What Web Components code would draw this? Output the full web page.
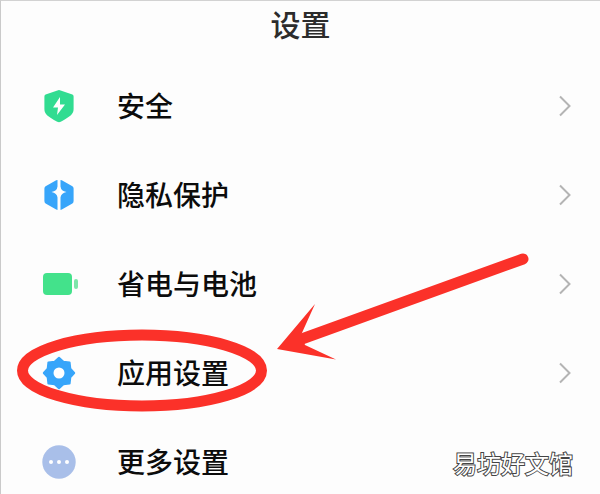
<!DOCTYPE html>
<html lang="zh-CN">
<head>
<meta charset="utf-8">
<meta name="viewport" content="width=device-width, initial-scale=1">
<title>设置</title>
<style>
  body {
    margin: 0;
    background: #fdfdfd;
    color: #0c0c0c;
    font-family: "Noto Sans CJK SC", sans-serif;
  }
</style>
</head>
<body>
<settings-page heading="设置">
  <settings-row icon="shield" arrow>安全</settings-row>
  <settings-row icon="privacy" arrow>隐私保护</settings-row>
  <settings-row icon="battery" arrow>省电与电池</settings-row>
  <settings-row icon="gear" arrow>应用设置</settings-row>
  <settings-row icon="more">更多设置</settings-row>
  <pointer-marks slot="overlay"></pointer-marks>
  <water-mark slot="overlay">易坊好文馆</water-mark>
</settings-page>

<script>
class SettingsElement extends HTMLElement {
  get html() {
    return `<slot></slot>`;
  }

  get css() {
    return ``;
  }

  constructor() {
    super();
    this.root = this.attachShadow({ mode: 'open' });
  }

  connectedCallback() {
    this.root.innerHTML = `<style>${this.css}</style>` + this.html;
  }

  /** SettingsRow is registered as settings-row, and so on. */
  static defineElement() {
    const elementName = this.name.replace(
      /([a-z0-9])([A-Z])/g, '$1-$2').toLowerCase();

    if (!customElements.get(elementName)) {
      customElements.define(elementName, this);
    }
  }
}

class SettingsPage extends SettingsElement {
  get html() {
    return `
      <header><h1>${this.getAttribute('heading')}</h1></header>
      <main><slot></slot></main>
      <slot name="overlay"></slot>`;
  }

  get css() {
    return `
      :host {
        display: block;
        position: relative;
        box-sizing: border-box;
        height: 100vh;
        overflow: hidden;
        border-top: 1px solid #d2d2d2;
        border-left: 1px solid #cacaca;
      }
      h1 {
        margin: 0;
        color: #2c2c2c;
        font-size: 30px;
        font-weight: 500;
        line-height: 44px;
        text-align: center;
      }
      header { padding-bottom: 16px; }
      main { display: grid; grid-auto-rows: 89px; }
    `;
  }
}

class SettingsRow extends SettingsElement {
  get html() {
    const arrow = this.hasAttribute('arrow') ? `
      <svg class="arrow" viewBox="0 0 12 22" aria-hidden="true">
        <path d="M1 1.5 10.5 11 1 20.5" fill="none" stroke="#b4b4b4" stroke-width="2"/>
      </svg>` : '';

    return `
      <a href="#${this.getAttribute('icon')}">
        <row-icon name="${this.getAttribute('icon')}"></row-icon>
        <span><slot></slot></span>
        ${arrow}
      </a>`;
  }

  get css() {
    return `
      :host { display: block; }
      a {
        display: flex;
        align-items: center;
        height: 100%;
        padding: 0 29px 0 40px;
        box-sizing: border-box;
        color: inherit;
        text-decoration: none;
      }
      span {
        flex: 1;
        padding: 0 0 2px 40px;
        font-size: 28px;
        font-weight: 500;
        line-height: 40px;
      }
      .arrow { width: 12px; height: 22px; }
    `;
  }
}

class RowIcon extends SettingsElement {
  static get SHAPES() {
    return {
      shield: `
        <path fill="#31dc91" d="M16.4 2.4q1.6-.7 3.2 0L31.4 6.500Q32.600 7 32.600 8.500V21c0 5.500-3.600 7.500-12.800 12.700q-1.800.9-3.600 0C7 28.500 3.400 26.500 3.400 21V8.500Q3.400 7 4.600 6.500Z"/>
        <path fill="#fff" d="M19 9 12 19.500h5L16 27 24 16.500h-5Z"/>`,
      privacy: `
        <path fill="#37a5fa" d="M16.500 3v6.500q-.5 4.500-6 5.500 5.500 1 6 5.500V33q-.6 0-1.300-.4L4.600 26.500Q3.400 25.700 3.400 24V11.500Q3.400 10 4.600 9.300L15.200 3.300Q16 3 16.500 3ZM19.500 3v6.500q.5 4.500 6 5.500-5.500 1-6 5.500V33q.6 0 1.300-.4L31.400 26.500Q32.600 25.700 32.600 24V11.500Q32.600 10 31.400 9.300L20.800 3.300Q20 3 19.500 3Z"/>`,
      battery: `
        <rect x="2" y="7" width="29" height="22" rx="4" fill="#43e28b"/>
        <rect x="33" y="13" width="4" height="10" rx="2" fill="#7de5a9"/>`,
      gear: `
        <path fill="#37a5fa" stroke="#37a5fa" stroke-width="2" stroke-linejoin="round" d="M18 2.800 22.400 6.700 28.600 7.400 29.300 13.600 33.200 18 29.300 22.400 28.600 28.600 22.400 29.300 18 33.200 13.600 29.300 7.400 28.600 6.700 22.400 2.800 18 6.700 13.600 7.400 7.400 13.600 6.700Z"/>
        <circle cx="18" cy="18" r="5.500" fill="#fff"/>`,
      more: `
        <circle cx="18" cy="18" r="16.700" fill="#a9bfe9"/>
        <g fill="#fff">
          <circle cx="10" cy="18" r="2"/>
          <circle cx="18" cy="18" r="2"/>
          <circle cx="26" cy="18" r="2"/>
        </g>`
    };
  }

  get html() {
    return `
      <svg viewBox="0 0 36 36" aria-hidden="true">
        ${RowIcon.SHAPES[this.getAttribute('name')]}
      </svg>`;
  }

  get css() {
    return `
      :host { display: block; width: 36px; height: 36px; }
      svg { display: block; width: 100%; height: 100%; overflow: visible; }
    `;
  }
}

/** Red ring around one row, with an arrow that points at it. */
class PointerMarks extends SettingsElement {
  get html() {
    return `
      <svg width="540" height="420" viewBox="0 0 540 420" aria-hidden="true">
        <ellipse cx="141" cy="369.500" rx="119.500" ry="35.500" fill="none" stroke="#fb3129" stroke-width="11"/>
        <path d="M522 258 298 339" fill="none" stroke="#fb3129" stroke-width="11" stroke-linecap="round"/>
        <path fill="#fb3129" d="M276 348 314 303 300 334 304 344 335 358.500Z"/>
      </svg>`;
  }

  get css() {
    return `
      :host { position: absolute; top: 0; left: 0; pointer-events: none; }
      svg { display: block; }
    `;
  }
}

class WaterMark extends SettingsElement {
  get css() {
    return `
      :host {
        position: absolute;
        right: 27px;
        bottom: 13px;
        color: #fff;
        font-size: 24px;
        line-height: 36px;
        -webkit-text-stroke: 2px #444;
        paint-order: stroke fill;
        pointer-events: none;
      }
    `;
  }
}

for (const element of [SettingsPage, SettingsRow, RowIcon, PointerMarks, WaterMark]) {
  element.defineElement();
}
</script>
</body>
</html>
